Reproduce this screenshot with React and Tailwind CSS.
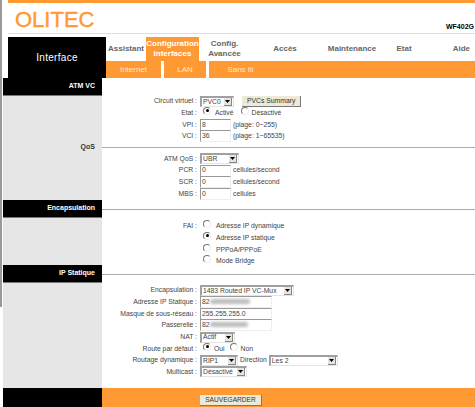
import React from 'react';

const tabs = [
  { w: 'w-[40px]', label: 'Assistant' },
  { w: 'w-[53px]', label: 'Configuration Interfaces', active: true },
  { w: 'w-[51px]', label: 'Config. Avancée' },
  { w: 'w-[70px]', label: 'Accès' },
  { w: 'w-[64px]', label: 'Maintenance' },
  { w: 'w-[40px]', label: 'Etat' },
  { w: 'w-[51px] justify-end pr-[5px]', label: 'Aide' },
];

function Select({ w, children }) {
  return (
    <span className={`inline-flex items-center justify-between h-[11px] ${w} border border-t-2 border-l-2 border-t-[#a0a0a0] border-l-[#a0a0a0] border-r-[#e4e4e4] border-b-[#e4e4e4] bg-white pl-[1px] pr-[1px] text-[6.8px] text-[#444]`}>
      <span className="whitespace-nowrap">{children}</span>
      <span className="flex items-center justify-center w-[8px] h-[8px] bg-[#e6e3dc] border-r border-b border-[#888]">
        <svg width="5" height="3" viewBox="0 0 5 3"><path d="M0 0h5L2.5 3z" fill="#000" /></svg>
      </span>
    </span>
  );
}

function Input({ w = 'w-[31px]', blur, children }) {
  return (
    <span className={`relative inline-flex items-center h-[12px] ${w} border border-t-[#999] border-l-[#999] border-r-[#eeeeee] border-b-[#eeeeee] bg-white pl-[1px] text-[6.8px] text-[#444] overflow-hidden`}>
      {children}
      {blur && <span className={`absolute left-[9px] top-[2px] h-[5px] ${blur} rounded bg-[#bcbcbc] blur-[1.5px]`} />}
    </span>
  );
}

function Radio({ on }) {
  return (
    <span className="relative inline-block shrink-0 w-[8px] h-[8px] mt-[-3px] rounded-full border border-t-[#777] border-l-[#777] border-r-[#eeeeee] border-b-[#eeeeee] bg-white">
      {on && <span className="absolute left-[1.5px] top-[1.5px] w-[3px] h-[3px] rounded-full bg-black" />}
    </span>
  );
}

function Row({ label, children }) {
  return (
    <div className="flex items-center h-[11.65px]">
      <div className="w-[95px] text-right text-[6.8px] text-[#444] whitespace-nowrap">{label}</div>
      <div className="flex items-center ml-[3px] text-[6.8px] text-[#444] whitespace-nowrap">{children}</div>
    </div>
  );
}

function SideTitle({ black, children }) {
  return (
    <div className={`flex items-center justify-end h-[18px] pr-[7px] text-[7px] font-bold ${black ? 'bg-black text-white border-b border-[#777]' : 'text-[#333]'}`}>
      {children}
    </div>
  );
}

export default function App() {
  return (
    <div className="relative w-[475px] h-[407px] overflow-hidden bg-white font-['Liberation_Sans',Arial,sans-serif]">
      <div className="absolute left-0 top-0 w-[1.5px] h-[307px] bg-[#999]" />
      <div className="ml-[8px]">
        <div className="h-[3px] bg-[#ff9933]" />
        <div className="flex items-end justify-between h-[31px] border-b border-[#ddd]">
          <div className="text-[22px] leading-[25px] text-[#ff9933] [-webkit-text-stroke:0.4px_#ff9933] ml-[7px] mb-[1px]">OLITEC</div>
          <div className="text-[7px] font-bold text-black mb-[1px] mr-[1px]">WF402G</div>
        </div>
        <div className="flex h-[44px] pt-[3px]">
          <div className="flex items-center justify-center w-[98px] bg-black text-white text-[10px] tracking-[0.3px] pb-[1px]">Interface</div>
          <div className="flex-1">
            <div className="flex h-[24px] items-center">
              {tabs.map(t => (
                <div key={t.label} className={`${t.w} shrink-0 flex items-center justify-center h-full text-center text-[8px] leading-[10px] font-bold ${t.active ? 'bg-[#ff9933] text-white' : 'text-[#666]'}`}>
                  {t.label}
                </div>
              ))}
            </div>
            <div className="flex h-[17px] bg-[#ff9933] text-[#ffe6cc] text-[8px] items-center">
              <div className="w-[55px] text-center">Internet</div>
              <div className="w-[3px] h-full bg-white" />
              <div className="w-[42px] text-center">LAN</div>
              <div className="w-[3px] h-full bg-white" />
              <div className="w-[63px] text-center">Sans fil</div>
            </div>
          </div>
        </div>
      </div>

      <div className="flex ml-[3px]">
        <div className="flex flex-col w-[99px] h-[329px] shrink-0 bg-[#e6e6e6]">
          <SideTitle black>ATM VC</SideTitle>
          <div className="h-[42px]" />
          <SideTitle>QoS</SideTitle>
          <div className="h-[44px]" />
          <SideTitle black>Encapsulation</SideTitle>
          <div className="h-[47px]" />
          <SideTitle black>IP Statique</SideTitle>
          <div className="h-[105px]" />
          <div className="h-[19px] bg-black" />
        </div>

        <div className="flex-1 min-w-0 flex flex-col h-[329px]">
          <div className="pt-[17.5px]">
            <Row label="Circuit virtuel :">
              <Select w="w-[34px]">PVC0</Select>
              <span className="flex items-center ml-[8px] px-[5px] h-[11px] bg-[#ece9d8] border-r border-b border-[#777] text-[#333]">PVCs Summary</span>
            </Row>
            <Row label="Etat :">
              <span className="ml-[3px]"><Radio on /></span>
              <span className="ml-[4px]">Activé</span>
              <span className="ml-[7px]"><Radio /></span>
              <span className="ml-[3px]">Désactivé</span>
            </Row>
            <Row label="VPI :"><Input>8</Input><span className="ml-[2px]">(plage: 0~255)</span></Row>
            <Row label="VCI :"><Input>36</Input><span className="ml-[2px]">(plage: 1~65535)</span></Row>
          </div>
          <div className="h-[1px] mt-[5px] bg-[#aaaaaa]" />
          <div className="pt-[5px]">
            <Row label="ATM QoS :"><Select w="w-[39px]">UBR</Select></Row>
            <Row label="PCR :"><Input>0</Input><span className="ml-[2px]">cellules/second</span></Row>
            <Row label="SCR :"><Input>0</Input><span className="ml-[2px]">cellules/second</span></Row>
            <Row label="MBS :"><Input>0</Input><span className="ml-[2px]">cellules</span></Row>
          </div>
          <div className="h-[1px] mt-[9px] bg-[#aaaaaa]" />
          <div className="pt-[11px]">
            <Row label="FAI :"><span className="ml-[3px]"><Radio /></span><span className="ml-[5px]">Adresse IP dynamique</span></Row>
            <Row label=""><span className="ml-[3px]"><Radio on /></span><span className="ml-[5px]">Adresse IP statique</span></Row>
            <Row label=""><span className="ml-[3px]"><Radio /></span><span className="ml-[5px]">PPPoA/PPPoE</span></Row>
            <Row label=""><span className="ml-[3px]"><Radio /></span><span className="ml-[5px]">Mode Bridge</span></Row>
          </div>
          <div className="h-[1px] mt-[7px] bg-[#aaaaaa]" />
          <div className="pt-[9.5px]">
            <Row label="Encapsulation :"><Select w="w-[94px]">1483 Routed IP VC-Mux</Select></Row>
            <Row label="Adresse IP Statique :"><Input w="w-[72px]" blur="w-[40px]">82</Input></Row>
            <Row label="Masque de sous-réseau :"><Input w="w-[72px]">255.255.255.0</Input></Row>
            <Row label="Passerelle :"><Input w="w-[72px]" blur="w-[38px]">82</Input></Row>
            <Row label="NAT :"><Select w="w-[35px]">Actif</Select></Row>
            <Row label="Route par défaut :">
              <span className="ml-[3px]"><Radio on /></span>
              <span className="ml-[3px]">Oui</span>
              <span className="ml-[5px]"><Radio /></span>
              <span className="ml-[3px]">Non</span>
            </Row>
            <Row label="Routage dynamique :">
              <Select w="w-[38px]">RIP1</Select>
              <span className="ml-[2px]">Direction</span>
              <span className="ml-[2px]"><Select w="w-[69px]">Les 2</Select></span>
            </Row>
            <Row label="Multicast :"><Select w="w-[47px]">Désactivé</Select></Row>
          </div>
          <div className="flex-1" />
          <div className="flex items-end h-[19px] pb-[1px] pl-[98px] bg-[#ff9933]">
            <span className="flex items-center justify-center w-[62px] h-[11px] bg-[#ece9d8] border-r border-b border-[#777] text-[6.6px] text-[#333]">SAUVEGARDER</span>
          </div>
        </div>
      </div>
    </div>
  );
}
